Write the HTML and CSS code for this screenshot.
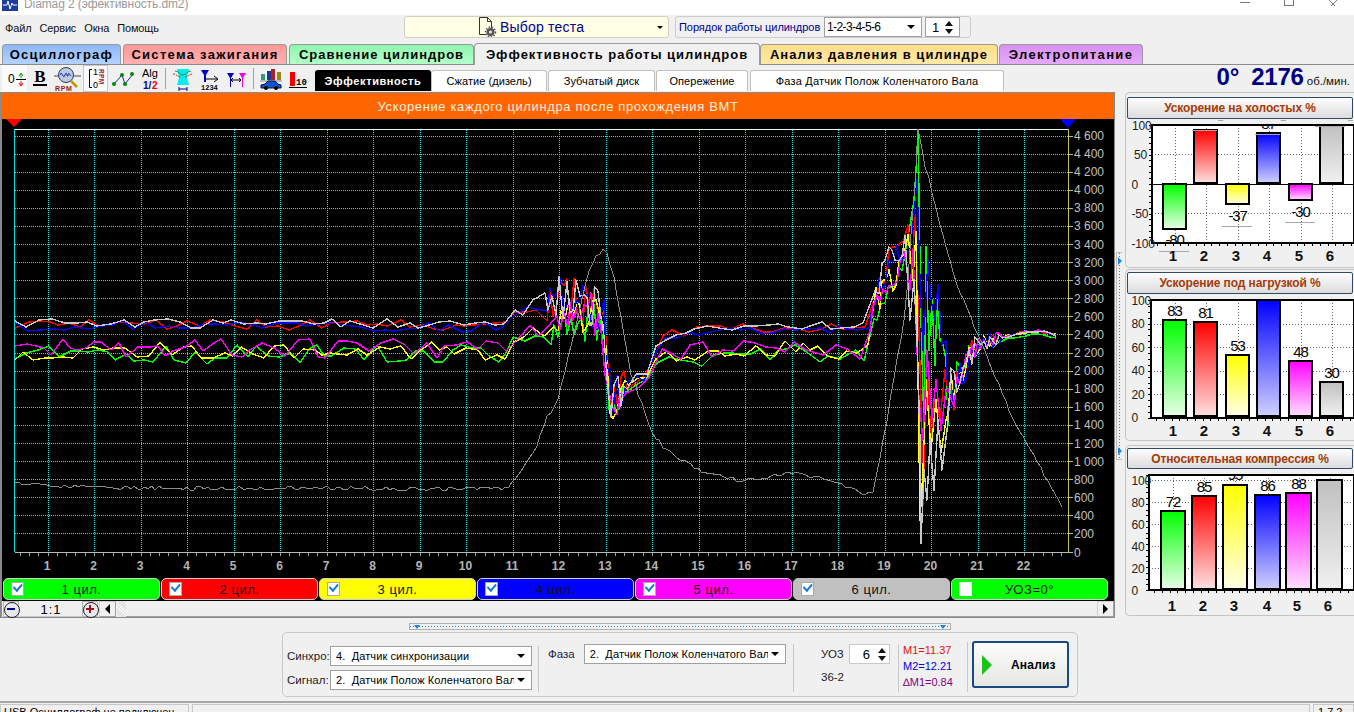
FILE: index.html
```html
<!DOCTYPE html>
<html lang="ru">
<head>
<meta charset="utf-8">
<title>Diamag 2</title>
<link rel="stylesheet" href="styles.css">
</head>
<body>
<div class="app">
  <header class="titlebar">
    <svg class="app-icon" width="16" height="11" viewBox="0 0 16 11"><rect width="16" height="11" fill="#1a3f9c"/><path d="M1 5h4l1-4 2 8 2-6 1 2h4" fill="none" stroke="#fff"/></svg>
    <span class="title-text">Diamag 2 (эфективность.dm2)</span>
    <div class="winctl">
      <span class="win-min"></span><span class="win-max"></span>
      <svg width="9" height="6" viewBox="0 0 9 6"><path d="M0 0l7 7M8 0L1 7" stroke="#777" fill="none"/></svg>
    </div>
  </header>

  <div class="menubar">
    <nav class="menu"><span>Файл</span><span>Сервис</span><span>Окна</span><span>Помощь</span></nav>
    <div class="test-select">
      <svg width="21" height="20" viewBox="0 0 21 20"><path d="M3.500 .5h8l4 4v8M3.500 .5v17h7M11.500 .5v4h4" fill="none" stroke="#333"/><circle cx="14.500" cy="15" r="4" fill="#555"/><circle cx="14.500" cy="15" r="5" fill="none" stroke="#555" stroke-dasharray="1.500 1.500" stroke-width="1.500"/><circle cx="14.500" cy="15" r="1.500" fill="#eee"/></svg>
      <span class="test-label">Выбор теста</span>
      <i class="caret caret-test"></i>
    </div>
    <div class="order-box">
      <span class="order-label">Порядок работы цилиндров</span>
      <div class="field order-field"><span>1-2-3-4-5-6</span><i class="caret"></i></div>
      <div class="field order-spin"><span>1</span><div class="spin"><i class="up"></i><i class="down"></i></div></div>
    </div>
  </div>

  <div class="tabs">
    <div class="tab tab-blue">Осциллограф</div>
    <div class="tab tab-red">Система зажигания</div>
    <div class="tab tab-green">Сравнение цилиндров</div>
    <div class="tab tab-active">Эффективность работы цилиндров</div>
    <div class="tab tab-yellow">Анализ давления в цилиндре</div>
    <div class="tab tab-purple">Электропитание</div>
  </div>

  <div class="toolbar">
    <div class="tool w25 dither"><svg width="20" height="24" viewBox="0 0 20 24"><text x="1" y="16" class="ic-t">0</text><path d="M9 12.500h10" stroke="#000"/><path d="M14 11V7M12 9l2-3 2 3" stroke="#0a0" fill="none"/><path d="M14 14v4M12 16l2 3 2-3" stroke="#e00" fill="none"/></svg></div>
    <div class="tool w26"><svg width="22" height="24" viewBox="0 0 22 24"><text x="11" y="15" text-anchor="middle" class="ic-b">B</text><path d="M4 18h14" stroke="#000" stroke-width="2"/></svg></div>
    <div class="tool w29"><svg width="29" height="26" viewBox="0 0 29 26"><path d="M1 10h27" stroke="#446"/><circle cx="13" cy="9" r="7.500" fill="#bcd" stroke="#336"/><path d="M7 9c2-6 3 6 5 0s2 5 3 0 2 3 3 0" fill="none" stroke="#22a"/><path d="M18 15l6 6" stroke="#b90" stroke-width="2.500"/><text x="2" y="25" class="ic-rpm">RPM</text></svg></div>
    <div class="tool w25 pressed"><svg width="23" height="25" viewBox="0 0 23 25"><path d="M8 3.500H5.500v18H8" fill="none" stroke="#000"/><text x="9" y="9" class="ic-s">1</text><text x="9" y="22" class="ic-s">0</text><text x="0" y="0" transform="translate(15 3) rotate(90)" class="ic-rpm2">RPM</text></svg></div>
    <div class="tool w29"><svg width="24" height="22" viewBox="0 0 24 22"><path d="M3 16L11 7l3 9 8-10" fill="none" stroke="#22c"/><circle cx="3" cy="16" r="2" fill="#080"/><circle cx="11" cy="7" r="2" fill="#080"/><circle cx="14" cy="16" r="2" fill="#080"/><circle cx="21" cy="6" r="2" fill="#080"/></svg></div>
    <div class="tool w25"><svg width="20" height="26" viewBox="0 0 20 26"><text x="2" y="11" class="ic-alg">Alg</text><text x="3" y="23" class="ic-half-a">1/</text><text x="12" y="23" class="ic-half-b">2</text></svg></div>
    <i class="tsep"></i>
    <div class="tool w28"><svg width="22" height="24" viewBox="0 0 22 24"><path d="M5 2h12l-2 9 2 7H5l2-7z" fill="#0ee"/><path d="M1 7c4 0 4 3 8 3M13 10c4 0 4-3 8-3" stroke="#d22" fill="none" stroke-dasharray="2 1"/><path d="M3 4c4 0 5 4 8 4s4-4 8-4" stroke="#094" fill="none"/><path d="M7 20v4M15 20v4M7 22h8" stroke="#008" fill="none"/></svg></div>
    <div class="tool w27"><svg width="22" height="24" viewBox="0 0 22 24"><path d="M1 3h8L6 8v7H4V8z" fill="#00c"/><path d="M6 12h11M14 9l4 3-4 3" stroke="#000" fill="none"/><text x="1" y="23" class="ic-num">1234</text></svg></div>
    <div class="tool w26"><svg width="20" height="22" viewBox="0 0 20 22"><path d="M0 5h7L4 10v9H3v-9z" fill="#00c"/><path d="M12 5h7l-3 5v9h-1v-9z" fill="#e0e"/><path d="M5 12h9M6 10l-2 2 2 2M12 10l2 2-2 2" stroke="#000" fill="none"/></svg></div>
    <i class="tsep"></i>
    <div class="tool w28"><svg width="24" height="24" viewBox="0 0 24 24"><rect x="2" y="7" width="4" height="6" fill="#397"/><rect x="8" y="4" width="4" height="9" fill="#239"/><rect x="12" y="2" width="4" height="11" fill="#a22"/><rect x="18" y="5" width="4" height="8" fill="#981"/><path d="M1 14h22" stroke="#888"/><path d="M2 21v-3l4-1 3-3h7l3 3 3 1v3z" fill="#15c" stroke="#014"/><circle cx="7" cy="21" r="2" fill="#000"/><circle cx="17" cy="21" r="2" fill="#000"/></svg></div>
    <div class="tool w25"><svg width="20" height="22" viewBox="0 0 20 22"><rect x="2" y="4" width="5" height="14" fill="#e00"/><text x="8" y="17" class="ic-ten">10</text><path d="M1 19.500h18" stroke="#000"/></svg></div>
    <div class="subtabs">
      <div class="stab stab-on s1">Эффективность</div>
      <div class="stab s2">Сжатие (дизель)</div>
      <div class="stab s3">Зубчатый диск</div>
      <div class="stab s4">Опережение</div>
      <div class="stab s5">Фаза Датчик Полож Коленчатого Вала</div>
    </div>
    <div class="rpm"><span class="rpm-a">0°</span><span class="rpm-b">2176</span><span class="rpm-u">об./мин.</span></div>
  </div>

  <main class="main">
    <section class="scope">
      <div class="scope-head">Ускорение каждого цилиндра после прохождения ВМТ</div>
      <svg id="plot" class="plot" width="1112" height="459" viewBox="2 119 1112 459"></svg>
      <div class="legend">
        <label class="cyl c-green"><i class="chk"></i>1 цил.</label>
        <label class="cyl c-red"><i class="chk"></i>2 цил.</label>
        <label class="cyl c-yellow"><i class="chk"></i>3 цил.</label>
        <label class="cyl c-blue"><i class="chk"></i>4 цил.</label>
        <label class="cyl c-magenta"><i class="chk"></i>5 цил.</label>
        <label class="cyl c-gray"><i class="chk"></i>6 цил.</label>
        <label class="cyl c-green"><i class="chk chk-off"></i>УОЗ=0°</label>
      </div>
      <div class="scrollrow">
        <span class="zoom-btn zm"></span>
        <span class="ratio">1:1</span>
        <span class="zoom-btn zp"></span>
        <span class="sb-btn sb-left"><i></i></span>
        <span class="sb-thumb"></span>
        <span class="sb-track"></span>
        <span class="sb-btn sb-right"><i></i></span>
      </div>
    </section>
    <div class="vsplit"><i class="vs-tri"></i><i class="vs-tri"></i></div>
    <aside class="side">
      <div class="group g1">
        <div class="ghead">Ускорение на холостых %</div>
        <svg id="chart1" class="chart" width="228" height="147"></svg>
      </div>
      <div class="group g2">
        <div class="ghead">Ускорение под нагрузкой %</div>
        <svg id="chart2" class="chart" width="228" height="147"></svg>
      </div>
      <div class="group g3">
        <div class="ghead gh3">Относительная компрессия %</div>
        <svg id="chart3" class="chart" width="228" height="147"></svg>
      </div>
    </aside>
  </main>

  <div class="hsplit"><i class="hs-tri"></i><i class="hs-tri"></i></div>

  <section class="panel">
    <div class="p-sensors">
      <span class="p-lab">Синхро:</span>
      <div class="field wide"><span>4.&nbsp; Датчик синхронизации</span><i class="caret"></i></div>
      <span class="p-lab">Сигнал:</span>
      <div class="field wide"><span>2.&nbsp; Датчик Полож Коленчатого Вал</span><i class="caret"></i></div>
    </div>
    <div class="p-phase">
      <span class="p-lab">Фаза</span>
      <div class="field wide"><span>2.&nbsp; Датчик Полож Коленчатого Вал</span><i class="caret"></i></div>
    </div>
    <div class="p-uoz">
      <div class="uoz-row"><span class="p-lab">УОЗ</span><div class="field uoz-spin"><span>6</span><div class="spin"><i class="up"></i><i class="down"></i></div></div></div>
      <span class="p-lab teeth">36-2</span>
    </div>
    <div class="p-m">
      <span class="m1">M1=11.37</span>
      <span class="m2">M2=12.21</span>
      <span class="m3">∆M1=0.84</span>
    </div>
    <div class="p-run">
      <div class="run-btn"><i class="play"></i><span>Анализ</span></div>
    </div>
  </section>

  <footer class="status">
    <div class="st st1">USB Осциллограф не подключен</div>
    <div class="st st2"></div>
    <div class="st st3">1.7.2</div>
  </footer>
</div>
<script src="chart.js"></script>
</body>
</html>
```
FILE: styles.css
```css
* { box-sizing: border-box; }
html, body { margin: 0; padding: 0; height: 100%; }
body { background: #f0f0f0; font-family: "Liberation Sans", Arial, sans-serif; color: #000; overflow: hidden; }
.app { width: 1354px; height: 712px; overflow: hidden; display: flex; flex-direction: column; }

.titlebar { height: 15px; background: #fff; display: flex; align-items: flex-end; position: relative; overflow: hidden; flex: none; }
.app-icon { margin: 0 0 4px 2px; }
.title-text { margin-left: 6px; font-size: 12px; line-height: 15px; color: #9a9a9a; height: 15px; position: relative; top: -3px; letter-spacing: -.1px; }
.winctl { margin-left: auto; display: flex; align-items: flex-start; height: 15px; padding-right: 16px; }
.win-min { width: 10px; height: 1px; background: #777; margin: 2px 34px 0 0; }
.win-max { width: 10px; height: 6px; border: 1px solid #777; border-top: 0; margin-right: 35px; }

.menubar { height: 28px; display: flex; align-items: flex-start; flex: none; }
.menu { width: 404px; display: flex; gap: 8px; padding: 7px 0 0 5px; font-size: 11px; line-height: 13px; letter-spacing: -.15px; color: #111; }
.test-select { width: 265px; height: 22px; margin-top: 1px; background: #ffffe5; border: 1px solid #cfcfc4; border-radius: 3px; display: flex; align-items: center; padding-left: 71px; }
.test-label { color: #00008b; font-size: 14px; margin-left: 3px; letter-spacing: .2px; }
.caret { display: block; width: 0; height: 0; border-left: 4px solid transparent; border-right: 4px solid transparent; border-top: 4px solid #000; margin-left: auto; flex: none; }
.caret-test { border-left-width: 3px; border-right-width: 3px; border-top-width: 3px; margin-right: 5px; }
.order-box { width: 296px; height: 22px; margin: 1px 0 0 6px; border: 1px solid #ccc; border-radius: 3px; display: flex; align-items: center; padding-left: 3px; }
.order-label { color: #00008b; font-size: 11px; width: 145px; white-space: nowrap; letter-spacing: -.05px; }
.field { background: #fff; border: 1px solid #a0a0a0; display: flex; align-items: center; font-size: 11px; padding: 0 6px 0 4px; white-space: nowrap; overflow: hidden; }
.order-field { width: 98px; height: 20px; font-size: 12px; padding-left: 2px; letter-spacing: -.6px; }
.order-spin { width: 35px; height: 20px; margin-left: 3px; padding: 0 6px; font-size: 13px; justify-content: space-between; }
.spin { display: flex; flex-direction: column; gap: 3px; }
.spin i { display: block; width: 0; height: 0; border-left: 4px solid transparent; border-right: 4px solid transparent; }
.spin .up { border-bottom: 5px solid #111; }
.spin .down { border-top: 5px solid #111; }

.tabs { height: 22px; display: flex; align-items: flex-end; padding-left: 2px; border-bottom: 1px solid #8a8a8a; flex: none; }
.tab { height: 20px; border: 1px solid #9a9a9a; border-bottom: 0; border-radius: 4px 4px 0 0; margin-right: 2px; font-size: 13px; font-weight: 700; display: flex; align-items: center; justify-content: center; white-space: nowrap; color: #050505; }
.tab-blue { width: 119px; letter-spacing: 1.27px; background: linear-gradient(#8cb8f8, #b4d2ff); }
.tab-red { width: 164px; letter-spacing: 1.3px; background: linear-gradient(#ff9898, #ffb2b2); }
.tab-green { width: 185px; margin-right: 0; letter-spacing: .98px; background: linear-gradient(#8ff5ae, #b4ffc9); }
.tab-active { width: 286px; height: 22px; margin-right: 0; background: #f0f0f0; margin-bottom: -1px; padding-bottom: 1px; letter-spacing: .98px; }
.tab-yellow { width: 238px; margin-right: 1px; letter-spacing: 1.02px; background: linear-gradient(#ffdd8a, #ffe9a8); }
.tab-purple { width: 144px; letter-spacing: 1.37px; background: linear-gradient(#d890f2, #e6aafa); }

.toolbar { height: 27px; display: flex; align-items: center; padding-left: 2px; flex: none; }
.tool { height: 27px; display: flex; align-items: center; justify-content: center; flex: none; }
.w25 { width: 25px; } .w26 { width: 26px; } .w27 { width: 27px; } .w28 { width: 28px; } .w29 { width: 29px; }
.dither { background: #fafafa; padding-left: 4px; }
.pressed { background: #fafafa; border: 1px solid #c8c8c8; margin-left: 1px; }
.tsep { width: 1px; height: 21px; background: #a0a0a0; margin: 0 3px; flex: none; }
.ic-t { font: 400 12px "Liberation Sans", sans-serif; }
.ic-b { font: 700 17px "Liberation Serif", serif; }
.ic-rpm { font: 700 7px "Liberation Sans", sans-serif; fill: #902020; letter-spacing: .6px; }
.ic-rpm2 { font: 700 6.5px "Liberation Sans", sans-serif; fill: #902020; letter-spacing: .4px; }
.ic-s { font: 400 9px "Liberation Sans", sans-serif; }
.ic-alg { font: 400 11px "Liberation Sans", sans-serif; }
.ic-half-a { font: 700 10px "Liberation Sans", sans-serif; fill: #00008b; }
.ic-half-b { font: 700 10px "Liberation Sans", sans-serif; fill: #e00; }
.ic-num { font: 700 7px "Liberation Mono", monospace; }
.ic-ten { font: 700 9px "Liberation Mono", monospace; }

.subtabs { display: flex; height: 22px; align-self: flex-end; margin: 0 0 1px 5px; }
.stab { height: 21px; margin-top: 1px; border: 1px solid #c0c0c0; border-bottom: 0; border-radius: 3px 3px 0 0; background: #fff; font-size: 11px; display: flex; align-items: center; justify-content: center; white-space: nowrap; margin-right: 1px; letter-spacing: .05px; }
.s1 { width: 116px; margin-right: 0; }
.s2 { width: 116px; }
.s3 { width: 107px; }
.s4 { width: 92px; margin-right: 2px; }
.s5 { width: 254px; letter-spacing: .2px; }
.stab-on { background: #000; color: #fff; font-weight: 700; letter-spacing: .6px; border-color: #000; font-size: 11px; }
.rpm { margin-left: auto; display: flex; align-items: baseline; color: #00007f; padding-right: 4px; font-weight: 700; font-size: 24px; line-height: 27px; letter-spacing: -.2px; }
.rpm-a { margin-right: 12px; }
.rpm-u { font-size: 11.500px; font-weight: 400; color: #111; margin-left: 3px; letter-spacing: 0; }

.main { height: 526px; display: flex; flex: none; align-items: flex-start; }
.scope { width: 1115px; height: 526px; flex: none; border-left: 2px solid #8a8a8a; border-right: 1px solid #8a8a8a; border-top: 1px solid #8a8a8a; border-bottom: 1px solid #8a8a8a; display: flex; flex-direction: column; }
.scope-head { height: 26px; background: #ff6600; color: #f4f0e0; font-size: 13px; display: flex; align-items: center; justify-content: center; letter-spacing: .62px; flex: none; }
.plot { display: block; background: #000; flex: none; }
.legend { height: 23px; background: #000; display: flex; gap: 1px; padding: 0 6px 1px 1px; flex: none; }
.cyl { flex: 1; position: relative; border: 1px solid #cfcfcf; border-radius: 5px; font-size: 13px; letter-spacing: .55px; display: flex; align-items: center; justify-content: center; color: #111; }
.c-green { background: #00ff00; }
.c-red { background: #ff0000; }
.c-yellow { background: #ffff00; }
.c-blue { background: #0000ff; }
.c-magenta { background: #ff00ff; }
.c-gray { background: #c0c0c0; border-color: #c0c0c0; }
.chk { position: absolute; left: 7px; top: 3px; width: 13px; height: 14px; background: #fff; border: 1px solid #aaa; }
.chk::after { content: ""; position: absolute; left: 2px; top: 1px; width: 7px; height: 4px; border-left: 2px solid #1177dd; border-bottom: 2px solid #1177dd; transform: rotate(-50deg) skewX(-6deg); transform-origin: 40% 60%; }
.chk-off::after { display: none; }
.chk-off { border-color: #fff; }
.scrollrow { height: 16px; display: flex; align-items: stretch; background: #f0f0f0; padding-left: 1px; flex: none; }
.zoom-btn { width: 16px; border: 1px solid #b8b8b8; position: relative; flex: none; }
.zoom-btn::before { content: ""; position: absolute; left: 0; top: 0; width: 14px; height: 14px; border: 1.500px solid #222; border-radius: 50%; background: #e8e8f0; }
.zoom-btn::after { content: ""; position: absolute; left: 3px; top: 3px; width: 8px; height: 8px; background: linear-gradient(#00008b, #00008b) center / 8px 2px no-repeat; }
.zp::after { background: linear-gradient(#a01010, #a01010) center / 8px 2px no-repeat, linear-gradient(#a01010, #a01010) center / 2px 8px no-repeat; }
.ratio { width: 62px; margin-left: 1px; font-size: 13px; letter-spacing: 1px; text-align: center; line-height: 17px; background: #efefef; border-bottom: 1px solid #c8c8c8; flex: none; }
.sb-btn { width: 17px; background: #f0f0f0; border: 1px solid #d0d0d0; border-right-color: #a0a0a0; border-bottom-color: #a0a0a0; display: flex; align-items: center; justify-content: center; flex: none; }
.sb-left { margin-left: 1px; }
.sb-btn i { width: 0; height: 0; border-top: 5px solid transparent; border-bottom: 5px solid transparent; display: block; }
.sb-left i { border-right: 5px solid #000; }
.sb-right i { border-left: 5px solid #000; }
.sb-thumb { width: 9px; margin-left: 1px; background: repeating-linear-gradient(45deg, #ddd 0 1px, #f6f6f6 1px 2px); flex: none; }
.sb-track { flex: 1; background: #f0f0f0; border-bottom: 1px solid #a0a0a0; }

.vsplit { width: 6px; height: 208px; margin: 160px 0 0 1px; flex: none; border: 1px solid #bbb; border-right: 0; display: flex; flex-direction: column; justify-content: space-between; align-items: center; padding: 4px 0; background-image: linear-gradient(#1c86e6 50%, transparent 50%); background-size: 1px 3px; background-repeat: repeat-y; background-position: 2px 0; }
.vs-tri { display: block; width: 0; height: 0; border-top: 4px solid transparent; border-bottom: 4px solid transparent; border-left: 4px solid #1c86e6; }

.side { width: 232px; margin-left: 3px; display: flex; flex-direction: column; flex: none; }
.group { border: 1px solid #c4c4c4; border-right: 0; border-radius: 5px 0 0 5px; padding-left: 1px; overflow: hidden; flex: none; }
.g1 { height: 176px; padding-top: 4px; }
.g2 { height: 172px; margin-top: 1px; padding-top: 2px; }
.g3 { height: 171px; margin-top: 4px; padding-top: 2px; }
.ghead { height: 22px; width: 226px; border: 1px solid #2f4a66; border-radius: 2px; background: linear-gradient(#fdfdfd, #dcdcdc); color: #a33c08; font-size: 12px; font-weight: 700; text-align: center; line-height: 20px; letter-spacing: -.1px; }
.gh3 { height: 21px; }
.chart { display: block; overflow: hidden; }
.frame { fill: none; stroke: #000; stroke-width: 2; }
.ggrid { stroke: #666; stroke-width: 1; stroke-dasharray: 1 2; shape-rendering: crispEdges; }
.gtick { stroke: #000; stroke-width: 1; shape-rendering: crispEdges; }
.gbar { stroke: #000; stroke-width: 1.500; shape-rendering: crispEdges; }
.gmark { stroke: #a8a8a8; stroke-width: 1; shape-rendering: crispEdges; }
.gval { font: 400 15px "Liberation Sans", sans-serif; letter-spacing: -1.2px; fill: #000; text-anchor: middle; }
.gy { font: 400 12px "Liberation Sans", sans-serif; fill: #222; letter-spacing: -.2px; }
.gx { font: 700 15px "Liberation Sans", sans-serif; fill: #111; text-anchor: middle; }

.hsplit { width: 542px; height: 7px; margin: 5px 0 0 409px; border: 1px solid #b0b0b0; display: flex; justify-content: space-between; align-items: center; padding: 0 4px; flex: none; background-image: linear-gradient(90deg, #1c86e6 50%, transparent 50%); background-size: 3px 1px; background-repeat: repeat-x; background-position: 0 2px; }
.hs-tri { display: block; width: 0; height: 0; border-left: 3px solid transparent; border-right: 3px solid transparent; border-top: 4px solid #1c86e6; }

.panel { width: 796px; height: 65px; margin: 2px 0 0 282px; border: 1px solid #c8c8c8; border-radius: 5px; display: flex; align-items: stretch; flex: none; font-size: 12px; }
.p-lab { color: #222; font-size: 11.500px; white-space: nowrap; }
.wide { width: 202px; height: 20px; padding-left: 5px; letter-spacing: .1px; }
.wide span { overflow: hidden; width: 178px; }
.p-sensors { width: 256px; margin-top: 13px; padding-left: 4px; display: grid; grid-template-columns: 43px 202px; row-gap: 4px; align-items: center; align-content: start; height: 46px; border-right: 1px solid #c8c8c8; margin-bottom: 5px; }
.p-phase { width: 255px; margin-top: 11px; padding-left: 9px; display: flex; align-items: flex-start; gap: 9px; }
.p-phase .p-lab { margin-top: 4px; color: #224; }
.p-phase { border-right: 1px solid #c8c8c8; height: 48px; margin-bottom: 5px; }
.p-uoz { width: 105px; margin: 11px 0 5px; display: flex; flex-direction: column; padding-left: 27px; border-right: 1px solid #c8c8c8; height: 48px; }
.uoz-row { display: flex; align-items: center; gap: 5px; }
.uoz-spin { width: 41px; height: 20px; padding: 0 3px 0 13px; font-size: 13px; justify-content: space-between; border-color: #c8c8c8; }
.teeth { margin-top: 7px; }
.p-m { width: 69px; margin: 9px 0 5px; padding-left: 4px; display: flex; flex-direction: column; font-size: 11px; line-height: 16px; height: 50px; border-right: 1px solid #c8c8c8; }
.m1 { color: #e01010; }
.m2 { color: #0000e0; }
.m3 { color: #800080; }
.p-run { flex: 1; padding: 8px 0 0 4px; }
.run-btn { width: 97px; height: 47px; border: 2px solid #174a80; border-radius: 3px; background: linear-gradient(#fcfcfc, #e6e6e2); display: flex; align-items: center; font-weight: 700; font-size: 12px; letter-spacing: .2px; padding-left: 8px; }
.play { display: block; width: 0; height: 0; border-top: 10px solid transparent; border-bottom: 10px solid transparent; border-left: 10px solid #1bc41b; margin-right: 19px; }

.status { height: 12px; margin-top: 4px; border-top: 2px solid #a8a8a8; display: flex; gap: 3px; flex: none; padding-top: 1px; font-size: 11px; line-height: 14px; overflow: hidden; }
.st { height: 14px; border: 1px solid #c8c8c8; padding-left: 3px; white-space: nowrap; }
.st1 { width: 189px; }
.st2 { width: 1118px; }
.st3 { flex: 1; padding-left: 4px; }

.g-h { stroke: #00f0f0; stroke-width: 1; stroke-dasharray: 1 1; shape-rendering: crispEdges; }
.g-v { stroke: #00f0f0; stroke-width: 1; stroke-dasharray: 1 1; shape-rendering: crispEdges; }
.ax-l { stroke: #00e0e0; stroke-width: 1; shape-rendering: crispEdges; }
.ax-t { stroke: #d8f8f8; stroke-width: 1; shape-rendering: crispEdges; }
.ax-b { stroke: #b8b8b8; stroke-width: 1; shape-rendering: crispEdges; }
.ax-r { stroke: #c8c040; stroke-width: 1; shape-rendering: crispEdges; }
.tk { stroke: #a0a0a0; stroke-width: 1; shape-rendering: crispEdges; }
.tky { stroke: #c8c040; stroke-width: 1; shape-rendering: crispEdges; }
.yl { font: 400 12px "Liberation Sans", sans-serif; fill: #c0c0c0; }
.xl { font: 700 12px "Liberation Sans", sans-serif; fill: #b4b4b4; text-anchor: middle; }
.tri-r { fill: #ff0000; }
.tri-b { fill: #0000ff; }
.tr { fill: none; stroke-width: 1.400; shape-rendering: crispEdges; stroke-linejoin: round; }
.t1 { stroke: #00ff00; } .t2 { stroke: #ff0000; } .t3 { stroke: #ffff00; }
.t4 { stroke: #0000ff; } .t5 { stroke: #ff00ff; } .t6 { stroke: #c8c8c8; }
.sig { fill: none; stroke: #8c8c8c; stroke-width: 1; shape-rendering: crispEdges; }
```
FILE: chart.js
```js
(function () {
  function rng(seed) {
    return function () {
      seed |= 0; seed = seed + 0x6D2B79F5 | 0;
      var t = Math.imul(seed ^ seed >>> 15, 1 | seed);
      t = t + Math.imul(t ^ t >>> 7, 61 | t) ^ t;
      return ((t ^ t >>> 14) >>> 0) / 4294967296;
    };
  }
  function interp(pts, x) {
    for (var i = 1; i < pts.length; i++) {
      if (x <= pts[i][0]) {
        var a = pts[i - 1], b = pts[i];
        return a[1] + (b[1] - a[1]) * (x - a[0]) / (b[0] - a[0]);
      }
    }
    return pts[pts.length - 1][1];
  }

  /* ---- main oscilloscope plot ---- */
  var s = '', i, x, y;
  var Y0 = 135.5, YS = 18.09, X0 = 47.5, XS = 46.5;
  for (i = 0; i < 23; i++) {
    y = Math.round(Y0 + i * YS) + .5;
    s += '<line class="g-h" x1="15" x2="1068" y1="' + y + '" y2="' + y + '"/>';
  }
  for (i = 0; i < 22; i++) {
    x = Math.round(X0 + i * XS) + .5;
    s += '<line class="g-v" x1="' + x + '" x2="' + x + '" y1="130" y2="552"/>';
  }
  s += '<line class="ax-l" x1="14.500" x2="14.500" y1="129" y2="552"/>';
  s += '<line class="ax-t" x1="15" x2="1068" y1="129.500" y2="129.500"/>';
  s += '<line class="ax-b" x1="15" x2="1068" y1="552.500" y2="552.500"/>';
  s += '<line class="ax-r" x1="1068.500" x2="1068.500" y1="129" y2="553"/>';
  for (x = X0 - 3 * 9.3; x < 1068; x += 9.3) {
    var rx = Math.round(x) + .5;
    s += '<line class="tk" x1="' + rx + '" x2="' + rx + '" y1="553" y2="556"/>';
  }
  for (i = 0; i < 22; i++) {
    s += '<text class="xl" x="' + (X0 + i * XS - .5) + '" y="570">' + (i + 1) + '</text>';
  }
  var labels = ['4 600', '4 400', '4 200', '4 000', '3 800', '3 600', '3 400', '3 200', '3 000', '2 800', '2 600', '2 400', '2 200', '2 000', '1 800', '1 600', '1 400', '1 200', '1 000', '800', '600', '400', '200', '0'];
  labels.forEach(function (t, k) {
    var yy = k === 23 ? 552 : Y0 + k * YS;
    var ry = Math.round(yy) + .5;
    s += '<line class="tky" x1="1069" x2="1073" y1="' + ry + '" y2="' + ry + '"/>';
    s += '<text class="yl" x="1074" y="' + (yy + 4.5) + '">' + t + '</text>';
  });

  var envA = [[15, 324], [505, 325], [520, 311], [540, 302], [560, 298], [600, 305], [604, 320], [610, 400], [616, 390], [640, 378], [652, 370], [659, 338], [670, 335], [720, 326], [780, 328], [850, 327], [868, 325], [875, 297], [885, 268], [905, 243]];
  var envB = [[15, 351], [505, 350], [515, 335], [530, 333], [545, 335], [560, 312], [600, 316], [604, 340], [610, 412], [616, 398], [640, 382], [652, 374], [659, 352], [670, 356], [720, 351], [780, 348], [866, 354], [875, 302], [885, 288], [905, 262]];
  var envTail = [[950, 395], [960, 375], [970, 358], [978, 345], [1000, 338], [1020, 333], [1040, 331], [1057, 335]];

  function amp(x, g) {
    if (x < 505) return g === 'A' ? 5 : 10;
    if (x < 545) return 6;
    if (x < 605) return 23;
    if (x < 612) return 28;
    if (x < 625) return 20;
    if (x < 656) return 6;
    if (x < 868) return g === 'A' ? 5 : 9;
    return 14;
  }
  function tailAmp(x) {
    if (x < 960) return 28;
    if (x < 978) return 14;
    if (x < 1000) return 7;
    return 1;
  }
  var hand = {
    1: '910,225 914,200 916,170 918,131 921,320 924,430 926,247 929,350 932,300 935,365 937,300 940,340 943,345 946,360',
    2: '908,225 912,270 915,215 918,300 921,400 923,505 925,420 928,380 931,440 935,400 940,420 945,370',
    3: '908,235 913,280 916,232 918,375 920,520 923,470 926,380 931,450 936,400 941,453 946,420',
    4: '910,250 914,215 917,180 920,280 923,350 928,260 931,300 935,320 938,285 942,345 946,340',
    5: '910,290 913,250 915,300 919,400 923,440 927,350 932,420 936,380 941,430 946,390',
    6: '910,320 914,280 917,340 920,440 921,543 924,470 927,500 930,440 934,490 938,420 942,470 947,430'
  };
  var groups = { 1: 'B', 2: 'A', 3: 'B', 4: 'A', 5: 'B', 6: 'A' };
  var offs = { 1: 4, 2: 0, 3: 0, 4: 2, 5: -2, 6: -1 };
  for (var c = 1; c <= 6; c++) {
    var r = rng(c * 7919), g = groups[c], env = g === 'A' ? envA : envB, pts = [];
    x = 15;
    while (x < 905) {
      var inSpike = x >= 545 && x < 625 || x >= 868;
      var off = x < 868 ? offs[c] : offs[c] * 2;
      if (x >= 612 && x < 656) off = off * .5;
      pts.push(x.toFixed(0) + ',' + (interp(env, x) + off + (r() * 2 - 1) * amp(x, g)).toFixed(0));
      x += inSpike ? 2.6 + r() * 1.5 : (g === 'A' ? 8 : 7) + r() * 6;
    }
    var line = pts.join(' ') + ' ' + hand[c];
    pts = [];
    x = 948;
    while (x < 1057) {
      pts.push(x.toFixed(0) + ',' + (interp(envTail, x) + (c === 1 && x > 975 ? 3 : 0) + (r() * 2 - 1) * tailAmp(x)).toFixed(0));
      x += x < 1000 ? 3 : 6;
    }
    line += ' ' + pts.join(' ');
    s += '<polyline class="tr t' + c + '" points="' + line + '"/>';
  }
  var sigEnv = [[15, 483], [60, 486], [120, 488], [300, 488], [505, 489], [515, 480], [535, 450], [548, 415], [556, 405], [570, 350], [590, 265], [604, 247], [612, 270], [630, 370], [650, 430], [665, 450], [700, 470], [740, 481], [790, 473], [830, 480], [860, 492], [873, 493], [883, 440], [905, 313], [912, 220], [918, 130], [925, 165], [940, 226], [955, 280], [977, 333], [1013, 420], [1040, 467], [1063, 510]];
  var rs = rng(4242), sp = [];
  for (x = 15; x < 1064; x += 3.5) {
    sp.push(x.toFixed(0) + ',' + (interp(sigEnv, x) + (rs() * 2 - 1) * 2).toFixed(0));
  }
  s += '<polyline class="sig" points="' + sp.join(' ') + '"/>';
  s += '<polygon class="tri-r" points="6,119 22,119 14,127"/>';
  s += '<polygon class="tri-b" points="1060,119 1076,119 1068,128"/>';
  document.getElementById('plot').innerHTML = s;

  /* ---- side bar charts ---- */
  var fills = [['#00ff00', '#e8ffe8'], ['#ff0000', '#ffe0e0'], ['#ffff00', '#ffffe8'], ['#0000ff', '#d0d0ff'], ['#ff00ff', '#ffe0ff'], ['#c0c0c0', '#f0f0f0']];
  function barChart(o) {
    var h = '<defs>';
    fills.forEach(function (f, k) {
      h += '<linearGradient id="' + o.id + 'g' + k + '" x1="0" x2="0" y1="0" y2="1"><stop offset="0" stop-color="' + f[0] + '"/><stop offset="1" stop-color="' + f[1] + '"/></linearGradient>';
    });
    h += '<clipPath id="' + o.id + 'c"><rect x="' + o.x0 + '" y="' + o.y0 + '" width="' + (o.x1 - o.x0) + '" height="' + (o.y1 - o.y0) + '"/></clipPath></defs>';
    h += '<rect x="' + o.x0 + '" y="' + o.y0 + '" width="' + (o.x1 - o.x0) + '" height="' + (o.y1 - o.y0) + '" fill="#fff"/>';
    o.ticks.forEach(function (t) {
      var ry = Math.round(t[1]) + .5;
      h += '<line class="ggrid" x1="' + o.x0 + '" x2="' + o.x1 + '" y1="' + ry + '" y2="' + ry + '"/>';
    });
    o.bars.forEach(function (b) {
      var cx = Math.round((b[0] + b[1]) / 2) + .5;
      h += '<line class="ggrid" x1="' + cx + '" x2="' + cx + '" y1="' + o.y0 + '" y2="' + o.y1 + '"/>';
    });
    for (var ty = o.y0; ty <= o.y1; ty += (o.y1 - o.y0) / 20) {
      var q = Math.round(ty) + .5;
      h += '<line class="gtick" x1="' + (o.x0 - 3) + '" x2="' + o.x0 + '" y1="' + q + '" y2="' + q + '"/>';
    }
    for (var tx = o.x0 + 5; tx < o.x1; tx += 7.75) {
      var q2 = Math.round(tx) + .5;
      h += '<line class="gtick" x1="' + q2 + '" x2="' + q2 + '" y1="' + o.y1 + '" y2="' + (o.y1 + 3) + '"/>';
    }
    h += '<g clip-path="url(#' + o.id + 'c)">';
    o.bars.forEach(function (b, k) {
      h += '<rect class="gbar" fill="url(#' + o.id + 'g' + k + ')" x="' + b[0] + '" y="' + b[2] + '" width="' + (b[1] - b[0]) + '" height="' + (b[3] - b[2]) + '"/>';
      if (b[4] !== null) {
        h += '<text class="gval" x="' + (b[0] + b[1]) / 2 + '" y="' + (b[5] + 5) + '">' + b[4] + '</text>';
      }
    });
    h += '</g>';
    if (o.zero) h += '<line class="gtick" x1="' + o.x0 + '" x2="' + o.x1 + '" y1="' + o.zero + '" y2="' + o.zero + '"/>';
    (o.marks || []).forEach(function (m) {
      h += '<line class="gmark" x1="' + m[0] + '" x2="' + m[1] + '" y1="' + m[2] + '" y2="' + m[2] + '"/>';
    });
    h += '<rect class="frame" x="' + o.x0 + '" y="' + o.y0 + '" width="' + (o.x1 - o.x0) + '" height="' + (o.y1 - o.y0) + '"/>';
    o.ticks.forEach(function (t) {
      h += '<text class="gy" x="' + (t[2] || 1130.5) + '" y="' + (t[1] + 4.5) + '">' + t[0] + '</text>';
    });
    o.bars.forEach(function (b, k) {
      h += '<text class="gx" x="' + o.xl[k] + '" y="' + o.xy + '">' + (k + 1) + '</text>';
    });
    var el = document.getElementById(o.id);
    el.setAttribute('viewBox', '1126 ' + o.vy + ' 228 147');
    el.innerHTML = h;
  }
  barChart({
    id: 'chart1', vy: 120, x0: 1151, x1: 1353, y0: 126, y1: 244, zero: 185.5, xy: 262,
    ticks: [[100, 126, 1131], [50, 155, 1133], [0, 185], [-50, 214], [-100, 244]],
    xl: [1172, 1203, 1235, 1266, 1298, 1329],
    bars: [
      [1162, 1185, 185, 230, '-80', 241], [1193, 1216, 131, 184, null, 0], [1225, 1248, 185, 205, '-37', 217],
      [1256, 1279, 134, 184, '87', 125], [1288, 1311, 185, 201, '-30', 213], [1319, 1342, 126, 184, null, 0]
    ],
    marks: [[1158, 1188, 252.5], [1191, 1216, 131.5], [1221, 1251, 227.5], [1254, 1279, 135.5], [1284, 1314, 223.5], [1314, 1344, 127.5], [1217, 1222, 121.5], [1280, 1285, 121.5], [1347, 1352, 121.5]]
  });
  barChart({
    id: 'chart2', vy: 295, x0: 1150, x1: 1353, y0: 301, y1: 419, xy: 437,
    ticks: [[100, 301], [80, 324.500], [60, 348], [40, 371.500], [20, 395], [0, 418]],
    xl: [1172, 1203, 1235, 1266, 1298, 1329],
    bars: [
      [1162, 1185, 321, 417, '83', 312], [1193, 1216, 323, 417, '81', 314], [1225, 1248, 356, 417, '53', 347],
      [1256, 1279, 301, 417, null, 0], [1288, 1311, 362, 417, '48', 353], [1319, 1342, 383, 417, '30', 374]
    ]
  });
  barChart({
    id: 'chart3', vy: 470, x0: 1148, x1: 1353, y0: 476, y1: 591, xy: 612,
    ticks: [[100, 481], [80, 503], [60, 525], [40, 547], [20, 569], [0, 591]],
    xl: [1171, 1202, 1233, 1266, 1296, 1327],
    bars: [
      [1160, 1184, 512, 590, '72', 503], [1191, 1215, 497, 590, '85', 488], [1222, 1246, 486, 590, '95', 476],
      [1254, 1279, 496, 590, '86', 487], [1285, 1310, 494, 590, '88', 485], [1316, 1341, 481, 590, null, 0]
    ]
  });
})();
```
